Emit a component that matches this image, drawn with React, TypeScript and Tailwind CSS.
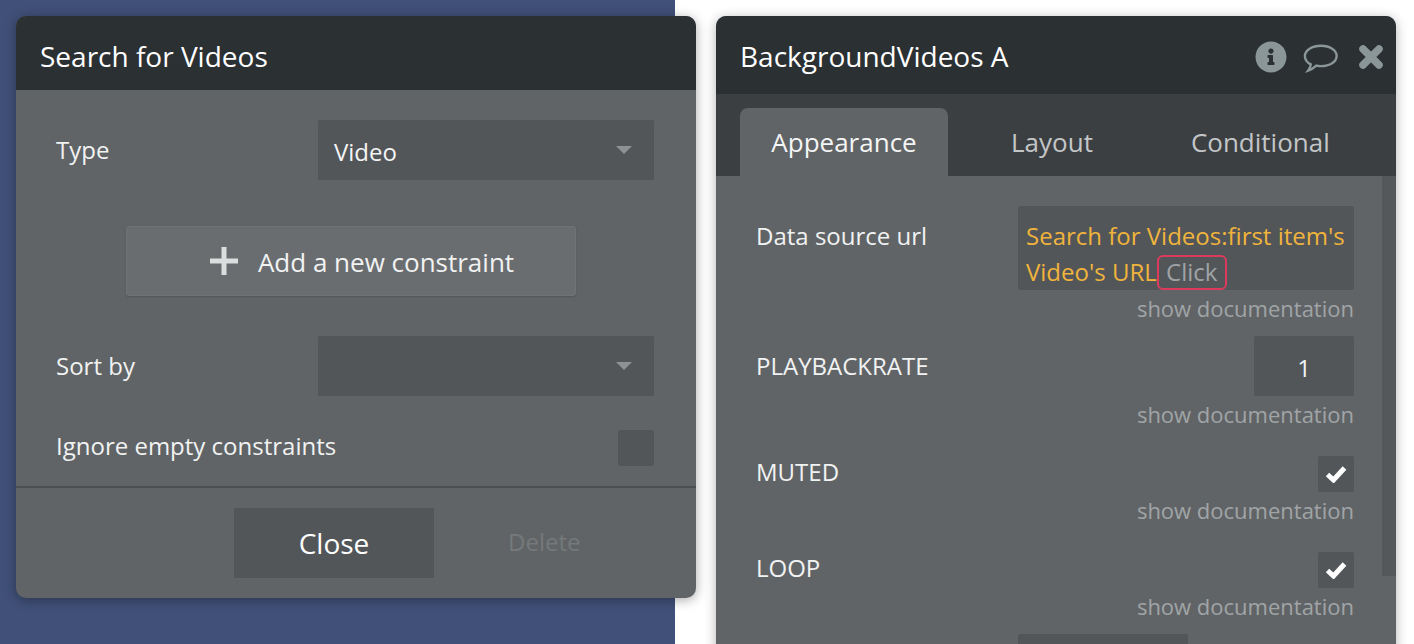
import React from "react";
import { FaInfoCircle } from "react-icons/fa";

function Caret() {
  return <div className="w-0 h-0 border-x-[8px] border-x-transparent border-t-[8px] border-t-[#8d9194]" />;
}

function Select({ value }: { value?: string }) {
  return (
    <div className="w-[336px] h-[60px] bg-[#525659] rounded-[1px] flex items-center justify-between pl-4 pr-[22px] text-[#f4f5f5]">
      <span className="text-[24px] leading-none relative top-[2px]">{value}</span>
      <Caret />
    </div>
  );
}

function Doc() {
  return <div className="mt-[3px] text-right text-[22px] leading-[30px] text-[#a0a4a6]">show documentation</div>;
}

function Check() {
  return (
    <div className="w-9 h-9 bg-[#525659] rounded-[2px] flex items-center justify-center text-white">
      <svg width="22" height="18" viewBox="0 0 22 18" fill="none" stroke="currentColor" strokeWidth="5" strokeLinejoin="miter">
        <path d="M2.500 9.500l6 5.500L19.500 3" />
      </svg>
    </div>
  );
}

export default function App() {
  return (
    <div
      className="relative h-[644px] w-[1414px] overflow-hidden bg-white text-[#f1f2f2]"
      style={{ fontFamily: '"Open Sans", sans-serif' }}
    >
      <div className="absolute inset-y-0 left-0 w-[675px] bg-[#405078]" />
      <div className="relative flex items-start gap-5 pl-4 pt-4">
        {/* Left panel */}
        <div className="w-[680px] h-[582px] rounded-[10px] bg-[#606467] shadow-[0_2px_12px_rgba(0,0,0,0.35)] overflow-hidden flex flex-col">
          <div className="h-[74px] shrink-0 bg-[#2b3033] flex items-center pl-6 pt-[6px] text-[28px] text-white">
            Search for Videos
          </div>
          <div className="pt-[30px] pl-10 pr-[42px]">
            <div className="flex items-center justify-between">
              <span className="text-[24px]">Type</span>
              <Select value="Video" />
            </div>
            <div className="mt-[46px] ml-[70px] w-[450px] h-[70px] bg-[#696d70] border border-[#6f7376] rounded-[3px] shadow-[0_1px_2px_rgba(0,0,0,0.15)] flex items-center justify-center gap-[20px] pl-[22px]">
              <svg width="28" height="28" viewBox="0 0 28 28" className="text-[#dcdddd]">
                <path d="M11.500 0h5v11.500H28v5H16.500V28h-5V16.500H0v-5h11.500z" fill="currentColor" />
              </svg>
              <span className="text-[26px] text-[#f1f2f2] relative top-[1px]">Add a new constraint</span>
            </div>
            <div className="mt-[40px] flex items-center justify-between">
              <span className="text-[24px]">Sort by</span>
              <Select />
            </div>
            <div className="mt-[34px] flex items-center justify-between">
              <span className="text-[24px] relative -top-[2px]">Ignore empty constraints</span>
              <div className="w-9 h-9 rounded-[2px] bg-[#525659]" />
            </div>
          </div>
          <div className="mt-[20px] border-t-2 border-[#4b4f51] pt-5 flex items-center">
            <div className="ml-[218px] w-[200px] h-[70px] bg-[#525659] flex items-center justify-center text-[28px] text-white">
              Close
            </div>
            <div className="ml-[74px] text-[24px] text-[#75797b] relative -top-[1px]">Delete</div>
          </div>
        </div>

        {/* Right panel */}
        <div className="w-[680px] h-[640px] rounded-t-[10px] bg-[#606467] shadow-[0_2px_12px_rgba(0,0,0,0.3)] overflow-hidden flex flex-col">
          <div className="h-[78px] shrink-0 bg-[#2b3033] flex items-center justify-between pl-6 pr-[13px] pt-[2px] text-[28px] text-white">
            <span>BackgroundVideos A</span>
            <div className="flex items-center mt-[2px] text-[#8b9698]">
              <FaInfoCircle size={32} />
              <svg className="ml-[16px] mt-[2px]" width="36" height="31" viewBox="0 0 38 32" fill="none" stroke="currentColor" strokeWidth="2.500">
                <path d="M19 2.500c9.500 0 16.500 4.800 16.500 10.800S28.500 24 19 24c-1.800 0-3.200-.1-5-.5-2.500 2.400-5 4-8.500 5.200 1.500-2 2.500-4 2.700-6.500C4 20 2 17 2 13.300 2 7.300 9.500 2.500 19 2.500z" />
              </svg>
              <svg className="ml-[20px]" width="24" height="24" viewBox="0 0 24 24" fill="none" stroke="currentColor" strokeWidth="7.500" strokeLinecap="round">
                <path d="M4 4l16 16M20 4L4 20" />
              </svg>
            </div>
          </div>
          <div className="h-[82px] shrink-0 bg-[#3b3f42] flex items-end pl-6 text-[26px] text-[#c3c6c7]">
            <div className="w-[208px] h-[68px] rounded-t-[8px] bg-[#606467] flex items-center justify-center text-[#f4f5f5]">
              Appearance
            </div>
            <div className="h-[68px] flex items-center ml-[63px]">Layout</div>
            <div className="h-[68px] flex items-center ml-[98px]">Conditional</div>
          </div>
          <div className="relative flex-1">
            <div className="absolute right-0 top-0 w-[14px] h-[400px] bg-[#54585b]" />
            <div className="pt-[30px] pl-10 pr-[42px]">
              <div className="flex justify-between items-start">
                <span className="text-[24px] leading-[60px]">Data source url</span>
                <div className="w-[336px] h-[84px] bg-[#525659] rounded-[2px] pl-2 pt-[12px] text-[24px] leading-[36px] text-[#f0b43c]">
                  Search for Videos:first item's
                  <br />
                  Video's URL
                  <span className="inline-block border-2 border-[#dc3a5c] rounded-[6px] w-[70px] text-center h-[35px] leading-[29px] text-[#a0a4a6] align-top mt-[1px]">
                    Click
                  </span>
                </div>
              </div>
              <Doc />
              <div className="mt-[13px] flex justify-between items-center">
                <span className="text-[24px]">PLAYBACKRATE</span>
                <div className="w-[100px] h-[60px] bg-[#525659] rounded-[2px] flex items-center justify-center pt-1 text-[24px] text-[#f4f5f5]">
                  1
                </div>
              </div>
              <Doc />
              <div className="mt-[27px] flex justify-between items-center">
                <span className="text-[24px] relative -top-[2px]">MUTED</span>
                <Check />
              </div>
              <Doc />
              <div className="mt-[27px] flex justify-between items-center">
                <span className="text-[24px] relative -top-[2px]">LOOP</span>
                <Check />
              </div>
              <Doc />
              <div className="mt-[13px] ml-[262px] w-[170px] h-10 bg-[#525659] rounded-t-[2px]" />
            </div>
          </div>
        </div>
      </div>
    </div>
  );
}
